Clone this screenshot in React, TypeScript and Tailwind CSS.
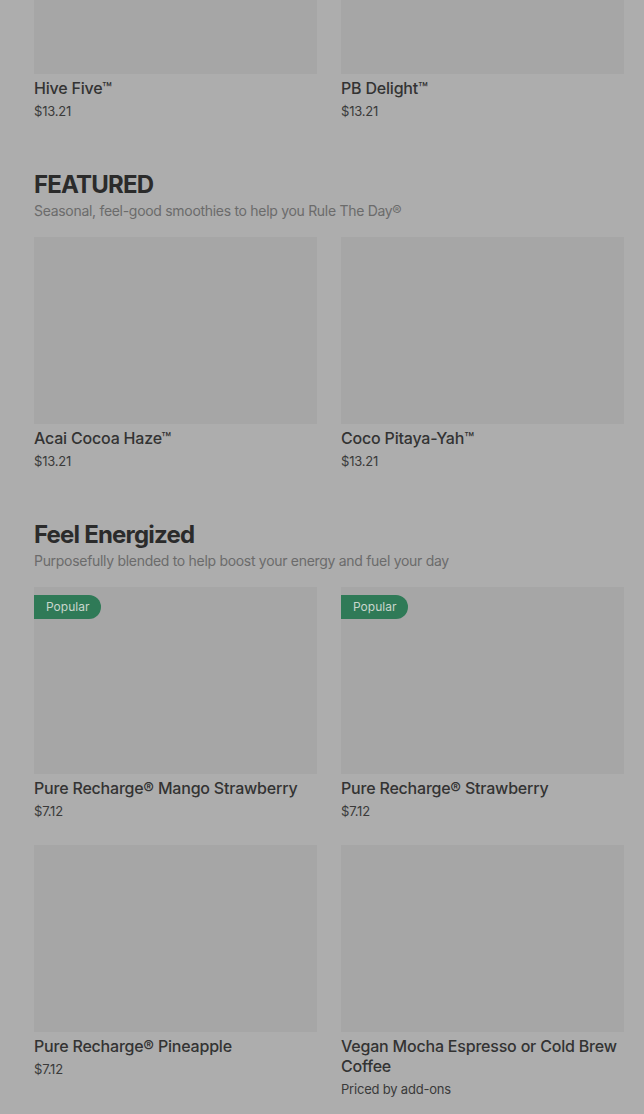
import * as React from 'react'

type Item = {
  name: string
  price: string
  popular?: boolean
}

type Section = {
  title?: string
  subtitle?: string
  items: Item[]
}

const sections: Section[] = [
  {
    items: [
      { name: 'Hive Five™', price: '$13.21' },
      { name: 'PB Delight™', price: '$13.21' },
    ],
  },
  {
    title: 'FEATURED',
    subtitle: 'Seasonal, feel-good smoothies to help you Rule The Day®',
    items: [
      { name: 'Acai Cocoa Haze™', price: '$13.21' },
      { name: 'Coco Pitaya-Yah™', price: '$13.21' },
    ],
  },
  {
    title: 'Feel Energized',
    subtitle: 'Purposefully blended to help boost your energy and fuel your day',
    items: [
      { name: 'Pure Recharge® Mango Strawberry', price: '$7.12', popular: true },
      { name: 'Pure Recharge® Strawberry', price: '$7.12', popular: true },
      { name: 'Pure Recharge® Pineapple', price: '$7.12' },
      { name: 'Vegan Mocha Espresso or Cold Brew Coffee', price: 'Priced by add-ons' },
    ],
  },
]

function ItemCard({ item }: { item: Item }) {
  return (
    <div>
      <div className="relative h-[187px] bg-[#a6a6a6]">
        {item.popular && (
          <span className="absolute left-0 top-[8px] flex h-[24px] items-center rounded-r-full bg-[#2f7a57] pl-[12px] pr-[12px] text-[12px] text-[#c9d6cd]">
            Popular
          </span>
        )}
      </div>
      <div className="mt-1 text-[16px] font-medium leading-5 tracking-[-0.2px] text-[#333333]">{item.name}</div>
      <div className="mt-1 text-[13px] leading-[18px] tracking-[-0.2px] text-[#3a3a3a]">{item.price}</div>
    </div>
  )
}

export default function App() {
  return (
    <div className="min-h-[1114px] overflow-hidden bg-[#adadad] pl-[34px] pr-[20px] font-['Inter',sans-serif]">
      <div className="mt-[-113px] flex flex-col gap-[49px]">
        {sections.map((section, i) => (
          <div key={i}>
            {section.title && (
              <>
                <h2 className="text-[24px] font-bold leading-8 tracking-[-0.8px] text-[#2b2b2b]">{section.title}</h2>
                <p className="text-[14px] leading-5 tracking-[-0.3px] text-[#6b6b6b]">{section.subtitle}</p>
              </>
            )}
            <div className={`grid grid-cols-2 gap-x-6 gap-y-[25px] ${section.title ? 'mt-4' : ''}`}>
              {section.items.map((item) => (
                <ItemCard key={item.name} item={item} />
              ))}
            </div>
          </div>
        ))}
      </div>
    </div>
  )
}
